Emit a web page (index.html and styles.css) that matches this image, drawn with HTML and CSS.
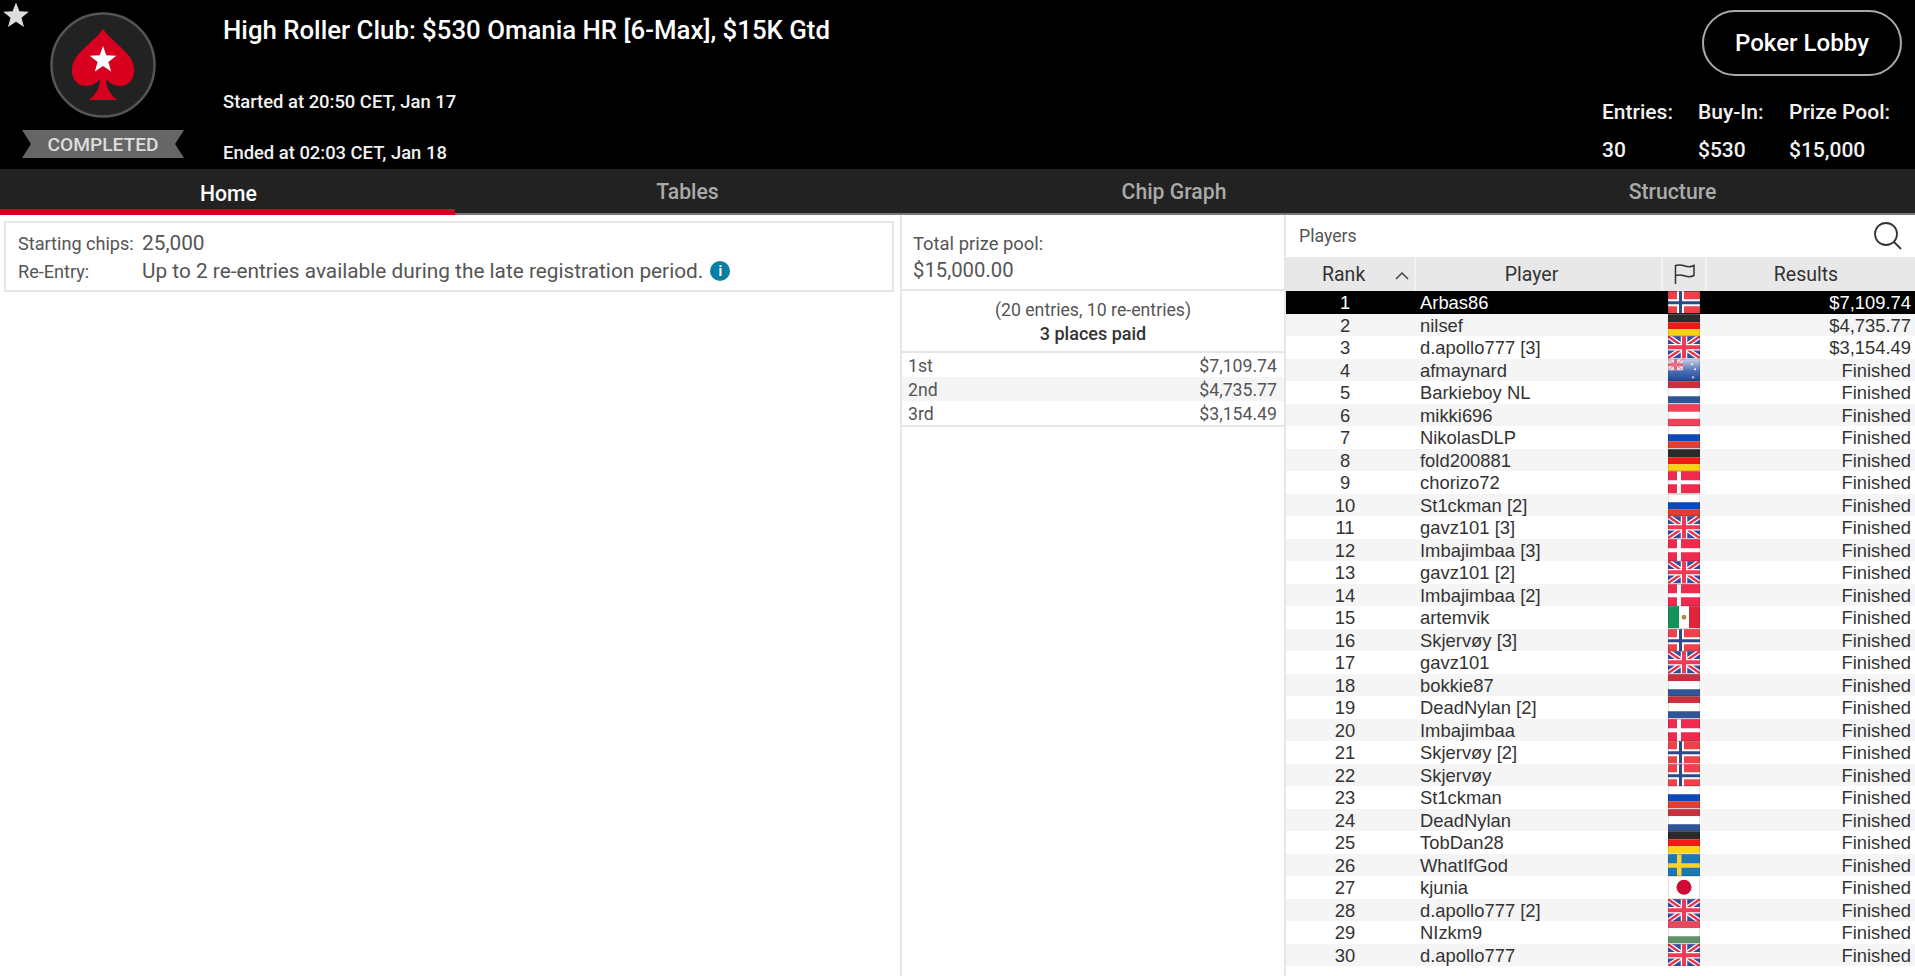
FILE: index.html
```html
<!DOCTYPE html>
<html lang="en">
<head>
<meta charset="utf-8">
<title>High Roller Club</title>
<link rel="stylesheet" href="styles.css">
</head>
<body>
<svg class="defs" width="0" height="0" aria-hidden="true">
  <defs>
    <symbol id="no" viewBox="0 0 32 22"><rect width="32" height="22" fill="#f0414a"/><rect x="9" width="7" height="22" fill="#fff"/><rect y="8" width="32" height="7" fill="#fff"/><rect x="11" width="3" height="22" fill="#2b4a86"/><rect y="10" width="32" height="3" fill="#2b4a86"/></symbol>
    <symbol id="de" viewBox="0 0 32 22"><rect width="32" height="8" fill="#2b2b2b"/><rect y="8" width="32" height="7" fill="#ee1c14"/><rect y="15" width="32" height="7" fill="#fcd116"/></symbol>
    <symbol id="gb" viewBox="0 0 32 22"><rect width="32" height="22" fill="#3a4a9c"/><path d="M0 0 32 22M32 0 0 22" stroke="#fff" stroke-width="5"/><path d="M0 0 32 22M32 0 0 22" stroke="#e8324a" stroke-width="2.400"/><path d="M16 0V22M0 11H32" stroke="#fff" stroke-width="6.500"/><path d="M16 0V22M0 11H32" stroke="#ee3a54" stroke-width="4"/></symbol>
    <symbol id="nz" viewBox="0 0 32 22"><defs><linearGradient id="nzg" x1="0" y1="0" x2="0" y2="1"><stop offset="0" stop-color="#c6cfe2"/><stop offset=".55" stop-color="#4a6cb4"/><stop offset="1" stop-color="#1f4598"/></linearGradient></defs><rect width="32" height="22" fill="url(#nzg)"/><rect width="15" height="11" fill="#dfe2ea"/><path d="M7.500 0V11M0 5.500H15" stroke="#e8627a" stroke-width="3"/><path d="M0 0 15 11M15 0 0 11" stroke="#e8829a" stroke-width="1"/><circle cx="24" cy="5" r="1" fill="#fff"/><circle cx="27" cy="10" r="1" fill="#fff"/><circle cx="25" cy="18" r="1.200" fill="#c8b0c8"/></symbol>
    <symbol id="nl" viewBox="0 0 32 22"><rect width="32" height="7" fill="#c8303f"/><rect y="7" width="32" height="8" fill="#fff"/><rect y="15" width="32" height="7" fill="#2f5597"/></symbol>
    <symbol id="at" viewBox="0 0 32 22"><rect width="32" height="22" fill="#f2405a"/><rect y="7.500" width="32" height="7" fill="#fff"/></symbol>
    <symbol id="ru" viewBox="0 0 32 22"><rect width="32" height="8" fill="#fff"/><rect y="8" width="32" height="7" fill="#0c47b7"/><rect y="15" width="32" height="7" fill="#e23d33"/></symbol>
    <symbol id="dk" viewBox="0 0 32 22"><rect width="32" height="22" fill="#ee2a4e"/><rect x="9" width="4" height="22" fill="#fff"/><rect y="9" width="32" height="4" fill="#fff"/></symbol>
    <symbol id="mx" viewBox="0 0 32 22"><rect width="11" height="22" fill="#11925c"/><rect x="11" width="10" height="22" fill="#fff"/><rect x="21" width="11" height="22" fill="#e0243c"/><circle cx="16" cy="11" r="2.400" fill="#a98c4a"/></symbol>
    <symbol id="se" viewBox="0 0 32 22"><rect width="32" height="22" fill="#1a78b8"/><rect x="9" width="4.500" height="22" fill="#fcd12a"/><rect y="9" width="32" height="4.500" fill="#fcd12a"/></symbol>
    <symbol id="jp" viewBox="0 0 32 22"><rect width="32" height="22" fill="#fff"/><circle cx="16" cy="11" r="7.500" fill="#cf0a35"/></symbol>
    <symbol id="hu" viewBox="0 0 32 22"><rect width="32" height="7" fill="#e9475c"/><rect y="7" width="32" height="8" fill="#fff"/><rect y="15" width="32" height="7" fill="#5f9268"/></symbol>
  </defs>
</svg>

<header class="top">
  <svg class="fav" viewBox="0 0 26 26" aria-hidden="true"><path d="M13 .5 16.400 9.300 25.800 9.800 18.500 15.800 21 25 13 19.800 5 25 7.500 15.800.2 9.800 9.600 9.300Z" fill="#ddd"/></svg>
  <div class="brand">
    <svg class="logo" viewBox="0 0 106 106" aria-hidden="true">
      <circle cx="53" cy="53" r="51.500" fill="#222" stroke="#555" stroke-width="2.500"/>
      <path d="M53 17C59 26 70 33 79 44 88 55 85 74 70 74 64 74 59 71 56 67 56 76 60 82 67 88H39C46 82 50 76 50 67 47 71 42 74 36 74 21 74 18 55 27 44 36 33 47 26 53 17Z" fill="#d9001f"/>
      <path d="M53 34 56.300 43.300 66.300 43.700 58.400 49.900 61.200 59.500 53 53.900 44.800 59.500 47.600 49.900 39.700 43.700 49.700 43.300Z" fill="#fff"/>
    </svg>
    <div class="ribbon">COMPLETED</div>
  </div>
  <div class="info">
    <h1 class="title">High Roller Club: $530 Omania HR [6-Max], $15K Gtd</h1>
    <p class="time">Started at 20:50 CET, Jan 17</p>
    <p class="time">Ended at 02:03 CET, Jan 18</p>
  </div>
  <div class="side">
    <button class="lobby">Poker Lobby</button>
    <div class="stats">
      <div class="stat stat-entries"><span>Entries:</span><span>30</span></div>
      <div class="stat stat-buyin"><span>Buy-In:</span><span>$530</span></div>
      <div class="stat"><span>Prize Pool:</span><span>$15,000</span></div>
    </div>
  </div>
</header>

<nav class="tabs">
  <div class="tab active">Home</div>
  <div class="tab">Tables</div>
  <div class="tab">Chip Graph</div>
  <div class="tab">Structure</div>
</nav>

<main class="content">
  <section class="home">
    <div class="card">
      <div class="card-row"><span class="card-label">Starting chips:</span><span class="card-value">25,000</span></div>
      <div class="card-row"><span class="card-label">Re-Entry:</span><span class="card-value">Up to 2 re-entries available during the late registration period.</span><span class="info-dot">i</span></div>
    </div>
  </section>

  <section class="prizes">
    <div class="pool">
      <div class="pool-label">Total prize pool:</div>
      <div class="pool-value">$15,000.00</div>
    </div>
    <div class="paid">
      <div>(20 entries, 10 re-entries)</div>
      <div class="paid-count">3 places paid</div>
    </div>
    <div class="places">
      <div class="place"><span>1st</span><span>$7,109.74</span></div>
      <div class="place"><span>2nd</span><span>$4,735.77</span></div>
      <div class="place"><span>3rd</span><span>$3,154.49</span></div>
    </div>
  </section>

  <section class="players">
    <div class="search">
      <span>Players</span>
      <svg class="search-icon" viewBox="0 0 30 30" aria-hidden="true"><circle cx="13" cy="13" r="11" fill="none" stroke="#333" stroke-width="1.800"/><path d="M21 21 28 28" stroke="#333" stroke-width="1.800"/></svg>
    </div>
    <div class="thead">
      <div class="th th-rank"><span>Rank</span><svg class="caret" viewBox="0 0 14 8" aria-hidden="true"><path d="M1 7 7 1 13 7" fill="none" stroke="#444" stroke-width="1.500"/></svg></div>
      <div class="th th-player">Player</div>
      <div class="th"><svg class="flag-head" viewBox="0 0 21 20" aria-hidden="true"><path d="M1.500 20V1.500C5 .5 8 1 11 2 14 3 17 3 20 1.500V11.500C17 13 14 13 11 12 8 11 5 10.500 1.500 11.500" fill="none" stroke="#333" stroke-width="1.500"/></svg></div>
      <div class="th th-results">Results</div>
    </div>
    <div class="tbody">
      <div class="row first"><span class="rank">1</span><span class="name">Arbas86</span><svg class="flag"><use href="#no"/></svg><span class="result">$7,109.74</span></div>
      <div class="row"><span class="rank">2</span><span class="name">nilsef</span><svg class="flag"><use href="#de"/></svg><span class="result">$4,735.77</span></div>
      <div class="row"><span class="rank">3</span><span class="name">d.apollo777 [3]</span><svg class="flag"><use href="#gb"/></svg><span class="result">$3,154.49</span></div>
      <div class="row"><span class="rank">4</span><span class="name">afmaynard</span><svg class="flag"><use href="#nz"/></svg><span class="result">Finished</span></div>
      <div class="row"><span class="rank">5</span><span class="name">Barkieboy NL</span><svg class="flag"><use href="#nl"/></svg><span class="result">Finished</span></div>
      <div class="row"><span class="rank">6</span><span class="name">mikki696</span><svg class="flag"><use href="#at"/></svg><span class="result">Finished</span></div>
      <div class="row"><span class="rank">7</span><span class="name">NikolasDLP</span><svg class="flag"><use href="#ru"/></svg><span class="result">Finished</span></div>
      <div class="row"><span class="rank">8</span><span class="name">fold200881</span><svg class="flag"><use href="#de"/></svg><span class="result">Finished</span></div>
      <div class="row"><span class="rank">9</span><span class="name">chorizo72</span><svg class="flag"><use href="#dk"/></svg><span class="result">Finished</span></div>
      <div class="row"><span class="rank">10</span><span class="name">St1ckman [2]</span><svg class="flag"><use href="#ru"/></svg><span class="result">Finished</span></div>
      <div class="row"><span class="rank">11</span><span class="name">gavz101 [3]</span><svg class="flag"><use href="#gb"/></svg><span class="result">Finished</span></div>
      <div class="row"><span class="rank">12</span><span class="name">Imbajimbaa [3]</span><svg class="flag"><use href="#dk"/></svg><span class="result">Finished</span></div>
      <div class="row"><span class="rank">13</span><span class="name">gavz101 [2]</span><svg class="flag"><use href="#gb"/></svg><span class="result">Finished</span></div>
      <div class="row"><span class="rank">14</span><span class="name">Imbajimbaa [2]</span><svg class="flag"><use href="#dk"/></svg><span class="result">Finished</span></div>
      <div class="row"><span class="rank">15</span><span class="name">artemvik</span><svg class="flag"><use href="#mx"/></svg><span class="result">Finished</span></div>
      <div class="row"><span class="rank">16</span><span class="name">Skjervøy [3]</span><svg class="flag"><use href="#no"/></svg><span class="result">Finished</span></div>
      <div class="row"><span class="rank">17</span><span class="name">gavz101</span><svg class="flag"><use href="#gb"/></svg><span class="result">Finished</span></div>
      <div class="row"><span class="rank">18</span><span class="name">bokkie87</span><svg class="flag"><use href="#nl"/></svg><span class="result">Finished</span></div>
      <div class="row"><span class="rank">19</span><span class="name">DeadNylan [2]</span><svg class="flag"><use href="#nl"/></svg><span class="result">Finished</span></div>
      <div class="row"><span class="rank">20</span><span class="name">Imbajimbaa</span><svg class="flag"><use href="#dk"/></svg><span class="result">Finished</span></div>
      <div class="row"><span class="rank">21</span><span class="name">Skjervøy [2]</span><svg class="flag"><use href="#no"/></svg><span class="result">Finished</span></div>
      <div class="row"><span class="rank">22</span><span class="name">Skjervøy</span><svg class="flag"><use href="#no"/></svg><span class="result">Finished</span></div>
      <div class="row"><span class="rank">23</span><span class="name">St1ckman</span><svg class="flag"><use href="#ru"/></svg><span class="result">Finished</span></div>
      <div class="row"><span class="rank">24</span><span class="name">DeadNylan</span><svg class="flag"><use href="#nl"/></svg><span class="result">Finished</span></div>
      <div class="row"><span class="rank">25</span><span class="name">TobDan28</span><svg class="flag"><use href="#de"/></svg><span class="result">Finished</span></div>
      <div class="row"><span class="rank">26</span><span class="name">WhatIfGod</span><svg class="flag"><use href="#se"/></svg><span class="result">Finished</span></div>
      <div class="row"><span class="rank">27</span><span class="name">kjunia</span><svg class="flag"><use href="#jp"/></svg><span class="result">Finished</span></div>
      <div class="row"><span class="rank">28</span><span class="name">d.apollo777 [2]</span><svg class="flag"><use href="#gb"/></svg><span class="result">Finished</span></div>
      <div class="row"><span class="rank">29</span><span class="name">NIzkm9</span><svg class="flag"><use href="#hu"/></svg><span class="result">Finished</span></div>
      <div class="row"><span class="rank">30</span><span class="name">d.apollo777</span><svg class="flag"><use href="#gb"/></svg><span class="result">Finished</span></div>
    </div>
  </section>
</main>
</body>
</html>
```
FILE: styles.css
```css
* { box-sizing: border-box; }
html, body { margin: 0; height: 100%; }
body {
  width: 1915px;
  height: 976px;
  overflow: hidden;
  background: #fff;
  color: #444;
  font-family: Roboto, "Liberation Sans", sans-serif;
  display: flex;
  flex-direction: column;
}
.defs { position: absolute; }

.top {
  position: relative;
  height: 169px;
  flex: none;
  background: #000;
  color: #fff;
  display: grid;
  grid-template-columns: 223px 1fr 313px;
}
.fav { position: absolute; left: 3px; top: 2px; width: 26px; height: 26px; }
.brand { display: flex; flex-direction: column; align-items: center; padding: 12px 39px 0 22px; }
.logo { width: 106px; height: 106px; display: block; flex: none; }
.ribbon {
  margin-top: 12px;
  width: 162px;
  height: 28px;
  flex: none;
  background: #666;
  color: #ddd;
  font-size: 19.200px;
  font-weight: 500;
  line-height: 30px;
  text-align: center;
  clip-path: polygon(0 0, 100% 0, 94.500% 50%, 100% 100%, 0 100%, 5.500% 50%);
}
.info { padding-top: 14px; }
.title { margin: 0; font-size: 25.800px; line-height: 32px; font-weight: 500; }
.time { margin: 0; font-size: 18.400px; line-height: 22px; font-weight: 500; color: #f2f2f2; }
.title + .time { margin-top: 45px; }
.time + .time { margin-top: 29px; }
.side { display: flex; flex-direction: column; align-items: flex-start; }
.lobby {
  margin: 10px 0 0 100px;
  width: 200px;
  height: 66px;
  border: 2px solid #aaa;
  border-radius: 33px;
  background: #000;
  color: #fff;
  font: 500 24.100px Roboto, sans-serif;
}
.stats { display: flex; margin-top: 23px; }
.stat { display: flex; flex-direction: column; font-size: 21px; font-weight: 500; line-height: 26px; gap: 12px; color: #f2f2f2; }
.stat-entries { width: 96px; }
.stat-buyin { width: 91px; }

.tabs {
  height: 46px;
  flex: none;
  background: #222;
  border-bottom: 2px solid #777;
  display: grid;
  grid-template-columns: 455px 463px 510px 487px;
}
.tab { padding-left: 2px; text-align: center; font-size: 21.200px; font-weight: 500; line-height: 46px; color: #aaa; }
.tab.active { color: #fff; line-height: 50px; height: 46px; border-bottom: 6px solid #d9001f; }

.content { flex: 1; min-height: 0; display: grid; grid-template-columns: 900px 386px 629px; }
.home { padding: 6px 6px 0 4px; }
.card { height: 71px; border: 2px solid #e6e6e6; padding: 6px 0 0 12px; }
.card-row { display: flex; align-items: center; height: 28px; }
.card-label { width: 124px; flex: none; font-size: 18.100px; color: #555; }
.card-value { font-size: 20.800px; color: #555; }
.info-dot {
  margin-left: 7px;
  width: 20px;
  height: 20px;
  border-radius: 50%;
  background: #0a7fa5;
  color: #fff;
  font: 700 14px/20px Roboto, sans-serif;
  text-align: center;
}

.prizes { border-left: 2px solid #e6e6e6; border-right: 2px solid #e6e6e6; }
.pool { height: 76px; padding: 16px 0 0 11px; border-bottom: 2px solid #e6e6e6; color: #555; }
.pool-label { font-size: 18.400px; line-height: 26px; }
.pool-value { font-size: 20.300px; line-height: 26px; }
.paid { height: 62px; padding-top: 7px; border-bottom: 2px solid #e6e6e6; text-align: center; font-size: 17.700px; line-height: 24px; color: #555; }
.paid-count { font-weight: 500; font-size: 18px; color: #333; }
.places { border-bottom: 2px solid #e6e6e6; }
.place { height: 24px; display: flex; justify-content: space-between; padding: 1px 7px 0 6px; font-size: 17.700px; line-height: 24px; color: #555; }
.place:nth-child(2) { background: #f5f5f5; }

.search { height: 42px; display: flex; align-items: center; justify-content: space-between; padding: 0 12px 0 13px; font-size: 17.700px; color: #555; }
.search-icon { width: 30px; height: 30px; }
.thead { height: 34px; display: grid; grid-template-columns: 128px 247px 44px 210px; background: #e8e8e8; }
.th { display: flex; align-items: center; justify-content: center; font-size: 19.500px; color: #333; border-left: 2px solid #f2f2f2; }
.th:first-child { border-left: 0; }
.th-rank { justify-content: flex-start; padding-left: 36px; }
.th-player { padding-right: 14px; }
.th-results { padding-right: 10px; }
.caret { width: 14px; height: 8px; margin-left: 30px; margin-top: 4px; }
.flag-head { width: 21px; height: 20px; }
.tbody { display: flex; flex-direction: column; }
.row {
  height: 22.500px;
  flex: none;
  display: grid;
  grid-template-columns: 118px 264px 32px 214px;
  align-items: center;
  padding-top: 1px;
  font-family: "Liberation Sans", Arial, sans-serif;
  font-size: 18.400px;
  color: #333;
}
.row:nth-child(even) { background: #f5f5f5; }
.row.first { background: #000; color: #fff; }
.rank { text-align: center; }
.name { white-space: nowrap; padding-left: 16px; }
.flag { width: 32px; height: 22.500px; display: block; margin-top: -1px; outline: 1px solid rgba(0,0,0,.12); outline-offset: -1px; }
.result { text-align: right; padding-right: 3px; }
```
